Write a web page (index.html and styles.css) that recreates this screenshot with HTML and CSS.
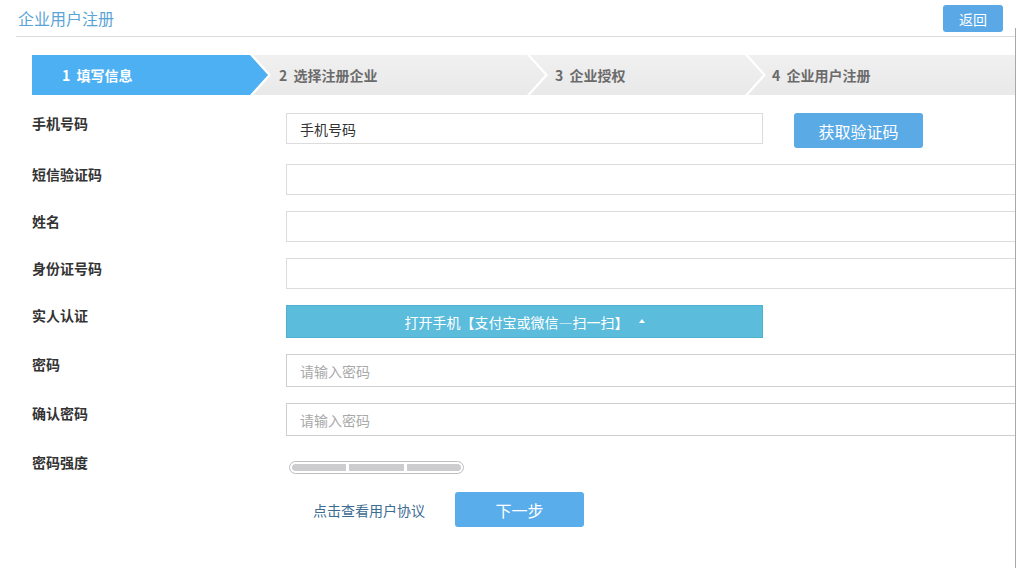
FILE: index.html
```html
<!DOCTYPE html>
<html lang="zh-CN">
<head>
  <meta charset="UTF-8">
  <title>企业用户注册</title>
  <link rel="stylesheet" href="styles.css">
</head>
<body>
  <div class="page">
    <div class="header">
      <h1 class="title">企业用户注册</h1>
      <button class="btn btn-back">返回</button>
    </div>

    <div class="steps">
      <div class="step step-1 active">1&nbsp; 填写信息</div>
      <div class="step step-2">2&nbsp; 选择注册企业</div>
      <div class="step step-3">3&nbsp; 企业授权</div>
      <div class="step step-4">4&nbsp; 企业用户注册</div>
    </div>

    <div class="form">
      <div class="row">
        <label class="label">手机号码</label>
        <input class="input input-phone" type="text" value="手机号码">
        <button class="btn btn-code">获取验证码</button>
      </div>
      <div class="row">
        <label class="label">短信验证码</label>
        <input class="input input-wide" type="text">
      </div>
      <div class="row">
        <label class="label">姓名</label>
        <input class="input input-wide" type="text">
      </div>
      <div class="row">
        <label class="label">身份证号码</label>
        <input class="input input-wide" type="text">
      </div>
      <div class="row">
        <label class="label">实人认证</label>
        <button class="btn btn-scan">打开手机【支付宝或微信—扫一扫】<span class="caret"></span></button>
      </div>
      <div class="row">
        <label class="label">密码</label>
        <input class="input input-wide input-tall" type="password" placeholder="请输入密码">
      </div>
      <div class="row">
        <label class="label">确认密码</label>
        <input class="input input-wide input-tall" type="password" placeholder="请输入密码">
      </div>
      <div class="row">
        <label class="label">密码强度</label>
        <div class="strength">
          <span></span><span></span><span></span>
        </div>
      </div>
      <div class="actions">
        <a class="link" href="#">点击查看用户协议</a>
        <button class="btn btn-next">下一步</button>
      </div>
    </div>
  </div>
</body>
</html>
```

FILE: styles.css
```css
body {
  margin: 0;
  background: #fff;
  font-family: "Microsoft YaHei", "Noto Sans CJK SC", "Noto Sans", sans-serif;
  color: #333;
}
.page {
  position: relative;
  width: 1016px;
  height: 568px;
  overflow: hidden;
}
.page::after {
  content: "";
  position: absolute;
  right: 0;
  top: 28px;
  bottom: 0;
  width: 1px;
  background: #a8a8a8;
}
.header {
  display: flex;
  align-items: center;
  justify-content: space-between;
  height: 36px;
  margin-left: 16px;
  padding: 0 13px 0 2px;
  border-bottom: 1px solid #dcdcdc;
}
.title {
  margin: 0;
  font-size: 16px;
  font-weight: normal;
  color: #5ba4d6;
}
.btn {
  border: none;
  color: #fff;
  font-family: inherit;
  cursor: pointer;
  border-radius: 3px;
}
.btn-back {
  width: 60px;
  height: 27px;
  margin-top: 1px;
  background: #5aa8e6;
  font-size: 14px;
  padding: 0;
}

/* steps */
.steps {
  display: flex;
  height: 40px;
  margin: 18px 0 0 32px;
}
.step {
  flex: none;
  height: 40px;
  line-height: 40px;
  padding-left: 26px;
  box-sizing: border-box;
  font-size: 14px;
  font-weight: bold;
  color: #6b6b6b;
  background: linear-gradient(#f0f0f0, #e9e9e9);
  margin-left: -15px;
  clip-path: polygon(0 0, calc(100% - 18px) 0, 100% 50%, calc(100% - 18px) 100%, 0 100%, 18px 50%);
}
.step.active {
  background: #4cb0f2;
  color: #fff;
}
.step-1 {
  width: 236px;
  margin-left: 0;
  padding-left: 30px;
  clip-path: polygon(0 0, calc(100% - 18px) 0, 100% 50%, calc(100% - 18px) 100%, 0 100%);
}
.step-2 { width: 292px; }
.step-3 { width: 233px; padding-left: 25px; }
.step-4 {
  width: 268px;
  padding-left: 24px;
  clip-path: polygon(0 0, 100% 0, 100% 100%, 0 100%, 18px 50%);
}

/* form */
.form {
  display: flex;
  flex-direction: column;
  gap: 16px;
  margin-top: 18px;
}
.row {
  display: flex;
  align-items: flex-start;
}
.label {
  flex: none;
  width: 254px;
  padding-left: 32px;
  line-height: 20px;
  font-size: 14px;
  font-weight: bold;
  color: #333;
}
.input {
  flex: none;
  height: 31px;
  box-sizing: border-box;
  border: 1px solid #dcdcdc;
  padding: 0 13px;
  font-family: inherit;
  font-size: 14px;
  color: #333;
  outline: none;
}
.input::placeholder {
  color: #a9a9a9;
}
.input-phone {
  width: 477px;
}
.input-wide {
  width: 760px;
}
.input-tall {
  height: 33px;
  border-color: #cfcfcf;
}
.btn-code {
  width: 129px;
  height: 35px;
  margin-left: 31px;
  background: #5aaae6;
  font-size: 16px;
}
.btn-scan {
  width: 477px;
  height: 33px;
  background: #5bbcdc;
  border: 1px solid #4fb0d0;
  border-radius: 0;
  font-size: 14px;
  display: flex;
  align-items: center;
  justify-content: center;
  gap: 10px;
}
.caret {
  width: 0;
  height: 0;
  border-left: 3px solid transparent;
  border-right: 3px solid transparent;
  border-bottom: 4px solid #fff;
  margin-top: -1px;
}
.strength {
  display: flex;
  gap: 3px;
  width: 175px;
  height: 13px;
  box-sizing: border-box;
  margin: 9px 0 0 3px;
  padding: 2px;
  border: 1px solid #bdbdbd;
  border-radius: 7px;
}
.strength span {
  flex: 1;
  background: #cdcdcf;
}
.strength span:first-child {
  border-radius: 4px 0 0 4px;
}
.strength span:last-child {
  border-radius: 0 4px 4px 0;
}
.actions {
  display: flex;
  align-items: center;
  gap: 30px;
  margin: 2px 0 0 313px;
}
.link {
  font-size: 14px;
  color: #3d6c93;
  text-decoration: none;
}
.btn-next {
  width: 129px;
  height: 35px;
  background: #5aadeb;
  font-size: 16px;
}
```
